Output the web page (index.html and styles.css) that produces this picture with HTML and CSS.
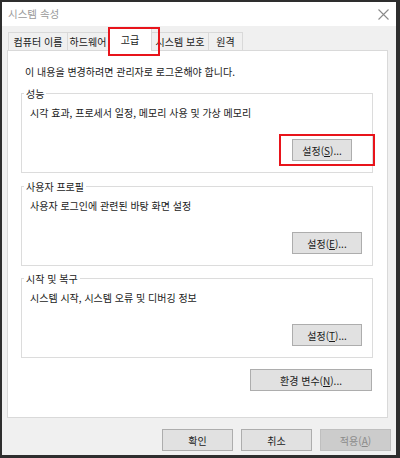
FILE: index.html
```html
<!DOCTYPE html>
<html lang="ko">
<head>
<meta charset="utf-8">
<title>시스템 속성</title>
<link rel="stylesheet" href="styles.css">
</head>
<body>
<div class="window">
  <div class="titlebar">
    <span class="title">시스템 속성</span>
    <svg class="close" width="11" height="11" viewBox="0 0 11 11"><path d="M0.5 0.5 L10.5 10.5 M10.5 0.5 L0.5 10.5" stroke="#8a8a8a" stroke-width="1.1" fill="none"/></svg>
  </div>
  <div class="body">
    <div class="tabs">
      <div class="tab t1">컴퓨터 이름</div>
      <div class="tab t2">하드웨어</div>
      <div class="tab t3 active">고급</div>
      <div class="tab t4">시스템 보호</div>
      <div class="tab t5">원격</div>
    </div>
    <div class="panel">
      <p class="intro">이 내용을 변경하려면 관리자로 로그온해야 합니다.</p>
      <div class="group">
        <div class="legend">성능</div>
        <p class="desc">시각 효과, 프로세서 일정, 메모리 사용 및 가상 메모리</p>
        <div class="actions"><button class="btn short">설정(<u>S</u>)...</button></div>
      </div>
      <div class="group g2">
        <div class="legend">사용자 프로필</div>
        <p class="desc">사용자 로그인에 관련된 바탕 화면 설정</p>
        <div class="actions"><button class="btn">설정(<u>E</u>)...</button></div>
      </div>
      <div class="group g3">
        <div class="legend">시작 및 복구</div>
        <p class="desc">시스템 시작, 시스템 오류 및 디버깅 정보</p>
        <div class="actions"><button class="btn">설정(<u>T</u>)...</button></div>
      </div>
      <div class="env-row"><button class="btn env">환경 변수(<u>N</u>)...</button></div>
    </div>
    <div class="footer">
      <button class="btn dlg">확인</button>
      <button class="btn dlg">취소</button>
      <button class="btn dlg disabled">적용(<u>A</u>)</button>
    </div>
  </div>
  <div class="highlight hl-tab"></div>
  <div class="highlight hl-btn"></div>
</div>
</body>
</html>
```
FILE: styles.css
```css
* { box-sizing: border-box; }
html, body { margin: 0; padding: 0; background: #ffffff; }
body {
  font-family: "Noto Sans CJK KR", "Noto Sans", sans-serif;
  font-size: 10px;
  color: #1a1a1a;
}
.window {
  position: relative;
  width: 400px;
  height: 458px;
  border-style: solid;
  border-color: #2e2e2e;
  border-width: 2px 4px 3px 2px;
  background: #f0f0f0;
  display: flex;
  flex-direction: column;
}
.titlebar {
  height: 24px;
  background: #ffffff;
  display: flex;
  align-items: center;
  justify-content: space-between;
  padding: 0 7px 0 6px;
}
.title {
  color: #9a9a9a;
  font-size: 10.5px;
  line-height: 14px;
}
.close { display: block; margin-top: 1px; }
.body {
  flex: 1;
  padding: 0 8px 0 5px;
}
.tabs {
  height: 24px;
  display: flex;
  align-items: flex-end;
  margin-left: 1px;
}
.tab {
  height: 18px;
  border: 1px solid #d9d9d9;
  border-bottom: none;
  margin-right: -1px;
  background: #f0f0f0;
  display: flex;
  align-items: center;
  justify-content: center;
  line-height: 13px;
  color: #1a1a1a;
  font-size: 10px;
}
.t1 { width: 60px; }
.t2 { width: 42px; }
.t3 { width: 44px; }
.t4 { width: 58px; }
.t5 { width: 35px; }
.tab.active {
  height: 23px;
  margin-bottom: -1px;
  background: #ffffff;
  position: relative;
  z-index: 1;
  padding-bottom: 2px;
}
.panel {
  background: #ffffff;
  border: 1px solid #d9d9d9;
  padding: 14px 0 26px 0;
}
.intro {
  margin: 0;
  padding-left: 17px;
  line-height: 14px;
}
.group {
  border: 1px solid #dcdcdc;
  margin: 14px 14px 0 13px;
  padding-bottom: 11px;
}
.group.g2 { margin-top: 13px; }
.group.g3 { margin-top: 12px; }
.legend {
  width: fit-content;
  margin: -7px 0 0 2px;
  padding: 0 2px;
  background: #ffffff;
  line-height: 13px;
  color: #222;
}
.desc {
  margin: 6px 0 0 0;
  padding-left: 8px;
  line-height: 14px;
}
.actions {
  display: flex;
  margin-top: 19px;
  padding-left: 270px;
}
.btn {
  font-family: inherit;
  font-size: 10px;
  color: #1a1a1a;
  height: 22px;
  width: 70px;
  padding: 0;
  background: #e1e1e1;
  border: 1px solid #adadad;
  line-height: 13px;
}
.btn.short { width: 60px; }
.btn u { text-underline-offset: 1px; }
.env-row {
  display: flex;
  justify-content: flex-end;
  padding-right: 15px;
  margin-top: 11px;
}
.btn.env { width: 122px; }
.footer {
  display: flex;
  justify-content: flex-end;
  gap: 8px;
  margin-top: 11px;
  margin-right: -3px;
}
.btn.dlg { width: 71px; }
.btn.disabled {
  background: #cccccc;
  border-color: #bfbfbf;
  color: #8a8a8a;
}
.highlight {
  position: absolute;
  border: 2px solid #e8141b;
  z-index: 5;
}
.hl-tab { left: 106px; top: 25px; width: 52px; height: 29px; }
.hl-btn { left: 277px; top: 132px; width: 96px; height: 32px; }
```
